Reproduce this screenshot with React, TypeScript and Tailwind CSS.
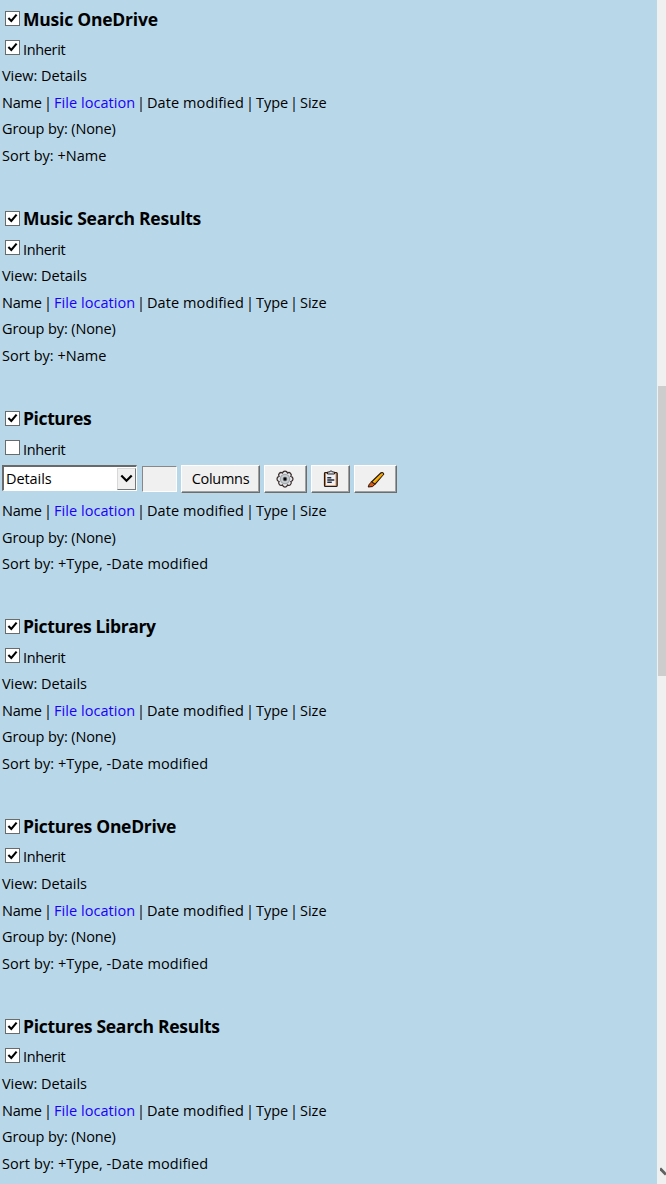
import React from "react";

type Section = {
  title: string;
  sort: string;
  editable?: boolean;
  titleClass: string;
  sortClass: string;
  inheritClass: string;
};

const sections: Section[] = [
  { title: "Music OneDrive", sort: "+Name", titleClass: "tracking-[-0.22px]", sortClass: "tracking-[0.02px]", inheritClass: "pt-px" },
  { title: "Music Search Results", sort: "+Name", titleClass: "-mt-[2px] tracking-[-0.24px]", sortClass: "tracking-[0.02px]", inheritClass: "pt-px" },
  { title: "Pictures", sort: "+Type, -Date modified", editable: true, titleClass: "-mt-[2px] tracking-[-0.4px]", sortClass: "tracking-[0.08px]", inheritClass: "pt-px" },
  { title: "Pictures Library", sort: "+Type, -Date modified", titleClass: "-mt-[2px] tracking-[-0.38px]", sortClass: "tracking-[0.08px]", inheritClass: "pt-px" },
  { title: "Pictures OneDrive", sort: "+Type, -Date modified", titleClass: "-mt-[2px] tracking-[-0.3px]", sortClass: "tracking-[0.08px]", inheritClass: "" },
  { title: "Pictures Search Results", sort: "+Type, -Date modified", titleClass: "-mt-[2px] tracking-[-0.28px]", sortClass: "tracking-[0.08px]", inheritClass: "" },
];

function Check({ on = true }: { on?: boolean }) {
  return (
    <span className="flex h-[15px] w-[15px] shrink-0 items-center justify-center border border-[#6b6b6b] bg-white">
      {on && (
        <svg width="13" height="13" viewBox="0 0 13 13" fill="none">
          <path d="M2.4 6 L5.3 8.9 L10.6 2.6" stroke="#000" strokeWidth="2.1" />
        </svg>
      )}
    </span>
  );
}

function Bevel({ className, children }: { className: string; children: React.ReactNode }) {
  return (
    <button
      className={`flex h-[28px] shrink-0 items-center justify-center border border-t-white border-l-white border-r-[#6d6d6d] border-b-[#6d6d6d] bg-[#f0f0f0] shadow-[inset_-1px_-1px_0_#a0a0a0] ${className}`}
    >
      {children}
    </button>
  );
}

function Gear() {
  return (
    <svg className="mr-[2px]" width="18" height="18" viewBox="0 0 18 18">
      <path
        d="M6.5 3 Q7 1 9 1 Q11 1 11.5 3 Q13.2 1.9 14.4 3.2 Q16 4.6 14.9 6.4 Q17 6.9 17 9 Q17 11 14.9 11.5 Q16 13.2 14.5 14.6 Q13.2 16 11.5 14.9 Q11 17 9 17 Q7 17 6.5 14.9 Q4.8 16 3.4 14.6 Q2 13.2 3 11.5 Q1 11 1 9 Q1 6.9 3 6.4 Q2 4.6 3.4 3.2 Q4.8 1.9 6.5 3z"
        fill="#e3e7eb" stroke="#3b2c2a" strokeWidth="1.25"
      />
      <circle cx="9" cy="9" r="4.6" fill="#c9cdd1" stroke="#a4a9af" strokeWidth="1.3" />
      <circle cx="9" cy="9" r="1.9" fill="#050607" stroke="#667078" strokeWidth=".6" />
    </svg>
  );
}

function Clipboard() {
  return (
    <svg width="18" height="18" viewBox="0 0 18 18">
      <rect x="2.5" y="2.5" width="12.7" height="14" rx="1" fill="#d98c4c" stroke="#201c20" strokeWidth="1.2" />
      <rect x="4" y="4" width="9.5" height="11.3" fill="#eef2f8" />
      <path d="M5.5 4V2h2l.7-1h1.6l.7 1h2v2z" fill="#dde2e8" stroke="#252020" />
      <path d="M5.3 7.8h4M5.3 10h7M5.3 12.3h4.5" stroke="#252836" strokeWidth="1.4" />
    </svg>
  );
}

function Brush() {
  return (
    <svg className="translate-y-px" width="18" height="18" viewBox="0 0 18 18">
      <path d="M4.5 11 14 1.8q2.2-.7 2.6 1.3L8 13.2z" fill="#ffc30a" stroke="#24170e" strokeWidth="1.3" />
      <path d="m7.2 12 8.6-9" stroke="#f59a00" strokeWidth="1.1" />
      <path d="M4.5 11 8 13.2Q6.5 16.5 1.2 16 1.6 12.8 4.5 11z" fill="#d35b13" stroke="#35140c" />
    </svg>
  );
}

function Toolbar() {
  return (
    <div className="flex h-[35px] items-start pt-[2px]">
      <div className="flex h-[26px] w-[135px] shrink-0 items-center border-t-2 border-l-2 border-r border-b border-t-[#696969] border-l-[#696969] border-r-white border-b-white bg-white">
        <span className="flex-1 pt-px pl-[2px] tracking-[-0.08px]">Details</span>
        <span className="flex h-[22px] w-[19px] items-center justify-center border border-[#d8d8d8] border-r-[#777] border-b-[#777] bg-[#f0f0f0]">
          <svg width="13" height="10" viewBox="0 0 13 10" fill="none">
            <path d="m1.3 1.5 5.2 5.2 5.2-5.2" stroke="#000" strokeWidth="2.2" />
          </svg>
        </span>
      </div>
      <div className="mt-px ml-[5px] h-[26px] w-[35px] shrink-0 border border-t-[#888] border-l-[#888] border-r-white border-b-white bg-[#f0f0f0]" />
      <Bevel className="ml-[4px] w-[79px]"><span className="pt-px tracking-[-0.28px]">Columns</span></Bevel>
      <Bevel className="ml-[4px] w-[43px]"><Gear /></Bevel>
      <Bevel className="ml-[4px] w-[39px]"><Clipboard /></Bevel>
      <Bevel className="ml-[4px] w-[43px]"><Brush /></Bevel>
    </div>
  );
}

function Group({ s }: { s: Section }) {
  return (
    <section className={`pl-[2px] whitespace-nowrap ${s.editable ? "h-[208px]" : "h-[200px]"}`}>
      <div className="flex h-[31px] items-center pl-[3px]">
        <Check />
        <h2 className={`ml-[3px] text-[17.5px] leading-[28px] font-bold ${s.titleClass}`}>{s.title}</h2>
      </div>
      <div className="flex h-[29px] pt-[6px] pl-[3px]">
        <Check on={!s.editable} />
        <span className={`ml-[3px] leading-[18px] tracking-[-0.35px] ${s.inheritClass}`}>Inherit</span>
      </div>
      {s.editable ? <Toolbar /> : <div className="h-[26.67px] tracking-[-0.03px]">View: Details</div>}
      <div className="flex h-[26.67px]">
        <span className="w-[42px] tracking-[-0.25px]">Name</span>
        <span className="w-[10px]">|</span>
        <span className="w-[83px] tracking-[0.05px] text-[#1a00ff]">File location</span>
        <span className="w-[10px]">|</span>
        <span className="w-[99px] tracking-[0.09px]">Date modified</span>
        <span className="w-[10px]">|</span>
        <span className="w-[34px]">Type</span>
        <span className="w-[10px]">|</span>
        <span>Size</span>
      </div>
      <div className="h-[26.67px] tracking-[-0.12px]">Group by: (None)</div>
      <div className={`h-[26.67px] ${s.sortClass}`}>Sort by: {s.sort}</div>
    </section>
  );
}

export default function App() {
  return (
    <div className="flex h-[1184px] w-[666px] overflow-hidden bg-[#b8d7e9] font-['Open_Sans',sans-serif] text-[14.5px] leading-[26.67px] text-black">
      <main className="min-w-0 flex-1 overflow-hidden pt-[3px]">
        {sections.map((s) => <Group key={s.title} s={s} />)}
      </main>
      <aside className="flex w-[9px] shrink-0 flex-col bg-[#f0f0f0]">
        <div className="mt-[386px] ml-px h-[290px] bg-[#cdcdcd]" />
        <svg className="mt-auto mb-[5px] ml-[3px]" width="6" height="13" viewBox="0 0 6 13" fill="none">
          <path d="M0 2.5 6 8.5" stroke="#606060" strokeWidth="3" />
        </svg>
      </aside>
    </div>
  );
}
